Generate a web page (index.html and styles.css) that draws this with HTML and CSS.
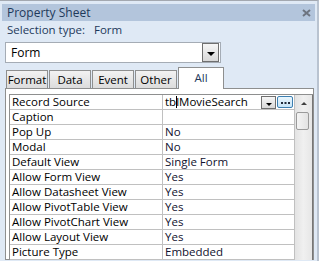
FILE: index.html
```html
<!DOCTYPE html>
<html lang="en">
<head>
  <meta charset="UTF-8">
  <title>Property Sheet</title>
  <link rel="stylesheet" href="styles.css">
</head>
<body>
  <div class="pane">
    <div class="titlebar">
      <span class="title">Property Sheet</span>
      <svg class="close" width="9" height="8" viewBox="0 0 9 8">
        <path d="M1 1 L8 7 M8 1 L1 7" stroke="#6d7480" stroke-width="2"/>
      </svg>
    </div>
    <div class="selection">Selection type:<span class="sel-value">Form</span></div>

    <div class="combo">
      <span class="combo-text">Form</span>
      <span class="combo-btn"><span class="arrow"></span></span>
    </div>

    <div class="tabs">
      <span class="tab">Format</span>
      <span class="tab">Data</span>
      <span class="tab">Event</span>
      <span class="tab">Other</span>
      <span class="tab active">All</span>
    </div>

    <div class="panel">
      <div class="grid-wrap">
        <div class="grid">
          <div class="row current">
            <div class="name">Record Source</div>
            <div class="value editing">
              <span class="edit-text">tb<span class="caret"></span>lMovieSearch</span>
              <span class="drop-btn"><span class="arrow small"></span></span>
              <span class="build-btn">
                <svg width="9" height="3" viewBox="0 0 9 3">
                  <rect x="0" y="1" width="2" height="2" fill="#1e2a3a"/>
                  <rect x="3.5" y="1" width="2" height="2" fill="#1e2a3a"/>
                  <rect x="7" y="1" width="2" height="2" fill="#1e2a3a"/>
                </svg>
              </span>
            </div>
          </div>
          <div class="row"><div class="name">Caption</div><div class="value"></div></div>
          <div class="row"><div class="name">Pop Up</div><div class="value">No</div></div>
          <div class="row"><div class="name">Modal</div><div class="value">No</div></div>
          <div class="row"><div class="name">Default View</div><div class="value">Single Form</div></div>
          <div class="row"><div class="name">Allow Form View</div><div class="value">Yes</div></div>
          <div class="row"><div class="name">Allow Datasheet View</div><div class="value">Yes</div></div>
          <div class="row"><div class="name">Allow PivotTable View</div><div class="value">Yes</div></div>
          <div class="row"><div class="name">Allow PivotChart View</div><div class="value">Yes</div></div>
          <div class="row"><div class="name">Allow Layout View</div><div class="value">Yes</div></div>
          <div class="row"><div class="name">Picture Type</div><div class="value">Embedded</div></div>
        </div>
        <div class="scrollbar">
          <div class="scroll-up"><span class="up"></span></div>
          <div class="thumb"></div>
        </div>
      </div>
    </div>
  </div>
</body>
</html>
```

FILE: styles.css
```css
body {
  margin: 0;
  background: #dfe9f5;
  font-family: "Open Sans", "Noto Sans", sans-serif;
  font-size: 11.5px;
  color: #000;
  overflow: hidden;
}

.pane {
  width: 317px;
  height: 260px;
  border-top: 1px solid #a3a8b0;
  border-right: 2px solid #b9c3d0;
  overflow: hidden;
}

.titlebar {
  display: flex;
  align-items: center;
  justify-content: space-between;
  height: 17px;
  margin: 3px 2px 0 2px;
  padding: 0 5px;
  background: #b3c5dc;
  color: #1e395b;
  font-size: 12px;
}

.close {
  margin-right: -1px;
}

.selection {
  height: 17px;
  line-height: 17px;
  padding-left: 7px;
  color: #1e395b;
  font-size: 11.5px;
}

.sel-value {
  margin-left: 9px;
}

.combo {
  display: flex;
  align-items: center;
  justify-content: space-between;
  width: 214px;
  height: 19px;
  margin: 4px 0 0 5px;
  border: 1px solid #a5acb5;
  background: #fff;
}

.combo-text {
  padding-left: 5px;
  font-size: 12px;
}

.combo-btn {
  display: flex;
  align-items: center;
  justify-content: center;
  width: 15px;
  height: 17px;
  margin-right: 1px;
  border: 1px solid #6f6f6f;
  background: linear-gradient(#f6f6f6, #d8d8d8);
}

.arrow {
  width: 0;
  height: 0;
  border-left: 4px solid transparent;
  border-right: 4px solid transparent;
  border-top: 4px solid #000;
  margin-top: 2px;
}

.arrow.small {
  border-left-width: 3px;
  border-right-width: 3px;
  border-top-width: 3px;
  margin-top: 6px;
}

.tabs {
  display: flex;
  align-items: flex-end;
  gap: 1px;
  height: 21px;
  margin: 4px 0 0 6px;
  position: relative;
  z-index: 1;
}

.tab {
  width: 42px;
  height: 18px;
  box-sizing: border-box;
  border: 1px solid #8e8f8f;
  border-bottom: none;
  background: linear-gradient(#f2f2f2, #dcdcdc);
  text-align: center;
  line-height: 18px;
  font-size: 11.5px;
}

.tab.active {
  width: 46px;
  height: 22px;
  margin-bottom: -1px;
  background: #fff;
  color: #1e395b;
  line-height: 20px;
}

.panel {
  width: 309px;
  height: 172px;
  margin-left: 5px;
  border: 1px solid #8e8f8f;
  background: #fff;
  padding: 5px 0 0 3px;
  box-sizing: border-box;
}

.grid-wrap {
  display: flex;
  width: 305px;
  border: 1px solid #8e8f8f;
  border-bottom: none;
  box-sizing: border-box;
}

.grid {
  width: 285px;
  border-right: 1px solid #c0c0c0;
}

.row {
  display: flex;
  height: 15px;
  border-bottom: 1px solid #c0c0c0;
  box-sizing: border-box;
  line-height: 14px;
}

.name {
  width: 150px;
  padding-left: 2px;
  border-right: 1px solid #c0c0c0;
  white-space: nowrap;
  overflow: hidden;
}

.value {
  flex: 1;
  padding-left: 2px;
  color: #10102e;
  white-space: nowrap;
}

.value.editing {
  display: flex;
  align-items: center;
  color: #000;
}

.edit-text {
  flex: 1;
}

.caret {
  display: inline-block;
  width: 1px;
  height: 12px;
  margin-right: -1px;
  background: #000;
  vertical-align: -2px;
}

.drop-btn {
  display: flex;
  justify-content: center;
  width: 13px;
  height: 11px;
  border: 1px solid #6f6f6f;
  background: linear-gradient(#f6f6f6, #d8d8d8);
}

.build-btn {
  display: flex;
  align-items: center;
  justify-content: center;
  width: 14px;
  height: 10px;
  margin: 0 1px 0 1px;
  border: 1px solid #3c7fb1;
  border-radius: 2px;
  background: linear-gradient(#eaf6fd, #c6e4f7);
}

.scrollbar {
  width: 17px;
  background: linear-gradient(90deg, #e3e3e3, #f0f0f0, #e6e6e6);
  border-right: 1px solid #767676;
}

.scroll-up {
  display: flex;
  justify-content: center;
  align-items: center;
  height: 16px;
}

.up {
  width: 0;
  height: 0;
  border-left: 3px solid transparent;
  border-right: 3px solid transparent;
  border-bottom: 3px solid #404040;
}

.thumb {
  width: 13px;
  height: 18px;
  margin: 1px 0 0 1px;
  border: 1px solid #9a9a9a;
  border-radius: 2px;
  background: linear-gradient(90deg, #f4f4f4, #e2e2e2);
  box-sizing: border-box;
}
```
